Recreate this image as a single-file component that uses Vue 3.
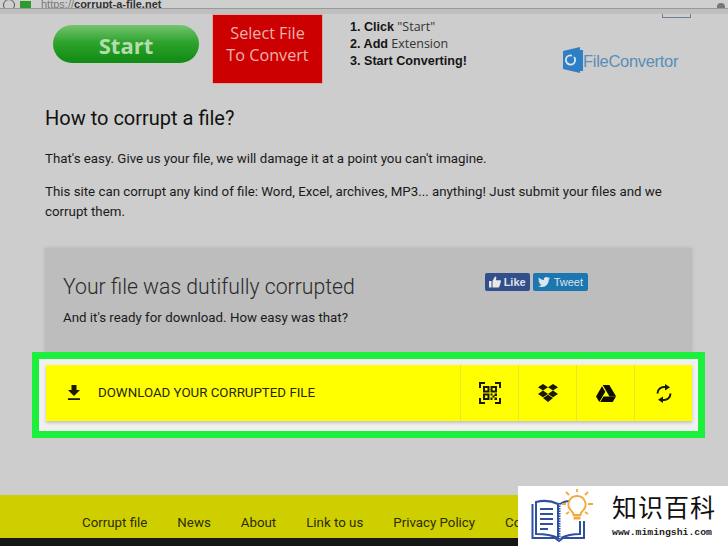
<template>
  <div class="page">
    <header class="browser-bar">
      <span class="reload"></span>
      <span class="lock"></span>
      <span class="url"><span class="scheme">https://</span>corrupt-a-file.net</span>
      <span class="menu-dot"></span>
    </header>
    <div class="bar-shadow"></div>

    <section class="ad-row">
      <div class="start-btn">Start</div>
      <div class="select-btn">Select File<br />To Convert</div>
      <ol class="steps">
        <li><b>1. Click</b> "Start"</li>
        <li><b>2. Add</b> Extension</li>
        <li><b>3. Start Converting!</b></li>
      </ol>
      <div class="convertor">
        <span class="ad-mark"></span>
        <div class="convertor-logo">
          <svg width="20" height="26" viewBox="0 0 20 26">
            <path d="M0 4 L17 0 V3 H20 V24 L17 24 V26 L0 22 Z" fill="#2f7fc4" />
            <circle cx="7.500" cy="13" r="4.600" fill="none" stroke="#dfe8f0" stroke-width="1.800" />
            <path d="M9 7 L13 9 L9 11 Z" fill="#2f7fc4" />
          </svg>
          <span>FileConvertor</span>
        </div>
      </div>
    </section>

    <main class="article">
      <h1>How to corrupt a file?</h1>
      <p>That's easy. Give us your file, we will damage it at a point you can't imagine.</p>
      <p>This site can corrupt any kind of file: Word, Excel, archives, MP3... anything! Just submit your files and we corrupt them.</p>
    </main>

    <section class="result-card">
      <div class="result-head">
        <h2>Your file was dutifully corrupted</h2>
        <div class="social">
          <span class="fb">
            <svg width="12" height="12" viewBox="0 0 12 12"><path d="M0 5h2.500v6.500H0z M3.500 5 L6 0.500 C7.200 0.500 7.600 1.500 7.200 2.800 L6.800 4.200 H11 C12 4.200 12.200 5.200 11.800 6 L10.400 10.600 C10.200 11.200 9.800 11.500 9.200 11.500 H3.500 Z" fill="#e8e8e8" /></svg>
            Like
          </span>
          <span class="tw">
            <svg width="12" height="10" viewBox="0 0 24 20"><path d="M24 2.400c-.9.4-1.800.7-2.800.8 1-.6 1.800-1.600 2.200-2.700-1 .6-2 1-3.100 1.200A4.900 4.900 0 0 0 11.900 6.100C7.800 5.900 4.200 3.900 1.700.9.400 3.200 1 6.100 3.200 7.500c-.8 0-1.500-.2-2.200-.6 0 2.400 1.700 4.400 3.900 4.900-.7.2-1.500.2-2.200.1.600 2 2.400 3.400 4.600 3.400A9.900 9.900 0 0 1 0 17.800 14 14 0 0 0 7.500 20c9.100 0 14.300-7.700 14-14.600 1-.7 1.800-1.600 2.500-3z" fill="#dce6ee" /></svg>
            Tweet
          </span>
        </div>
      </div>
      <p>And it's ready for download. How easy was that?</p>
    </section>

    <div class="highlight">
      <div class="download-bar">
        <div class="download-main">
          <svg class="dl-icon" width="14" height="15" viewBox="0 0 14 15">
            <path d="M4.500 0h5v5H13L7 11 1 5h3.500z" fill="#1c1c00" />
            <path d="M1 13.200h12V15H1z" fill="#1c1c00" />
          </svg>
          <span>DOWNLOAD YOUR CORRUPTED FILE</span>
        </div>
        <div class="action">
          <svg width="22" height="22" viewBox="0 0 22 22" fill="#1a1a00">
            <path d="M0 6V0h6v2H2v4z M16 0h6v6h-2V2h-4z M0 16h2v4h4v2H0z M20 16h2v6h-6v-2h4z" />
            <path fill-rule="evenodd" d="M4 4h6.500v6.500H4z M6 6v2.500h2.500V6z M11.500 4H18v6.500h-6.500z M13.500 6v2.500H16V6z M4 11.500h6.500V18H4z M6 13.500V16h2.500v-2.500z" />
            <path d="M11.500 11.500h2v2h-2z M15.500 11.500H18v2.500h-2.500z M13.500 13.500h2v2h-2z M11.500 15.500h2V18h-2z M15.500 15.500H18V18h-2.500z" />
          </svg>
        </div>
        <div class="action">
          <svg width="20" height="18" viewBox="0 0 20 18" fill="#1a1a00">
            <path d="M5 0 L10 3.300 L5 6.600 L0 3.300z M15 0 L20 3.300 L15 6.600 L10 3.300z M5 6.600 L10 9.900 L5 13.200 L0 9.900z M15 6.600 L20 9.900 L15 13.200 L10 9.900z M5 14 L10 10.800 L15 14 L10 18z" />
          </svg>
        </div>
        <div class="action">
          <svg width="20" height="17" viewBox="0 0 20 17" fill="#0d0d00">
            <path d="M6.700 0h6.600l6.700 11.300h-6.600z M6 1.200 L9.300 6.800 L3.300 17 L0 11.400z M7.500 11.500H20L16.700 17H4.200z" />
          </svg>
        </div>
        <div class="action">
          <svg width="16" height="19" viewBox="0 0 16 19" fill="none" stroke="#1a1a00" stroke-width="2">
            <path d="M1.500 9.500 A6.500 6.500 0 0 1 9 3.100" />
            <path d="M14.500 9.500 A6.500 6.500 0 0 1 7 15.900" />
            <path d="M9 0 L14 3.200 L9 6.400 Z M7 12.600 L2 15.800 L7 19 Z" fill="#1a1a00" stroke="none" />
          </svg>
        </div>
      </div>
    </div>

    <footer class="site-footer">
      <nav class="footer-nav">
        <span>Corrupt file</span>
        <span>News</span>
        <span>About</span>
        <span>Link to us</span>
        <span>Privacy Policy</span>
        <span>Contact</span>
      </nav>
      <div class="footer-black"></div>
    </footer>

    <aside class="watermark">
      <svg class="wm-icon" width="66" height="56" viewBox="0 0 66 56" fill="none">
        <path d="M1.500 15 V49 H24 L28 52 L32 49 H53 V32" stroke="#2f4f9f" stroke-width="2" />
        <path d="M5 45 V13 C13 11 21 12 27 15 V49 C21 46 13 45 5 45 Z" stroke="#2f4f9f" stroke-width="2" />
        <path d="M29 15 C32 13 35 12 38 12" stroke="#2f4f9f" stroke-width="2" />
        <path d="M49 32 V45 C43 45 36 46 30 49" stroke="#2f4f9f" stroke-width="2" />
        <path d="M9 20h13 M9 25h13 M9 30h13 M9 35h13 M9 40h8" stroke="#2f4f9f" stroke-width="2" />
        <path d="M28 14v36" stroke="#2f4f9f" stroke-width="3" stroke-dasharray="1.500 1" />
        <path d="M46 7 a8.500 8.500 0 0 0 -5.500 15 c1.500 1.500 2 2.500 2 4 h7 c0 -1.500 .5 -2.500 2 -4 a8.500 8.500 0 0 0 -5.500 -15z" stroke="#f2a93b" stroke-width="1.800" />
        <path d="M42.500 29h7" stroke="#f2a93b" stroke-width="3" />
        <path d="M46 0v3 M35 3l3 3 M57 3l-3 3 M31 15h4 M57 15h5 M35 25l3-2 M57 25l-3-2" stroke="#f2a93b" stroke-width="1.800" />
      </svg>
      <div class="wm-copy">
        <div class="wm-title">知识百科</div>
        <div class="wm-url">www.mimingshi.com</div>
      </div>
    </aside>
  </div>
</template>

<script setup>
</script>

<style>
html,
body {
  margin: 0;
  background: #cdcdcd;
}
</style>

<style scoped>
.page {
  position: relative;
  display: flex;
  flex-direction: column;
  width: 728px;
  height: 546px;
  overflow: hidden;
  background: #cdcdcd;
  font-family: Roboto, "Liberation Sans", sans-serif;
  color: #1a1a1a;
}

.browser-bar {
  display: flex;
  align-items: flex-end;
  flex: none;
  height: 8px;
  background: #cfcfcf;
  border-bottom: 1px solid #999;
  font-family: "Liberation Sans", sans-serif;
  overflow: hidden;
}

.reload {
  flex: none;
  width: 10px;
  height: 10px;
  margin: 0 0 -3px 3px;
  border: 1px solid #555;
  border-radius: 50%;
}

.lock {
  flex: none;
  width: 11px;
  height: 8px;
  margin: 0 0 -1px 5px;
  background: #2d9a2d;
}

.url {
  margin: 0 0 -2px 10px;
  font-size: 11px;
  line-height: 11px;
  font-weight: 700;
  color: #333;
}

.scheme {
  font-weight: 400;
  color: #777;
}

.menu-dot {
  width: 8px;
  height: 8px;
  margin: 0 3px -3px auto;
  border-radius: 50%;
  background: #777;
}

.bar-shadow {
  flex: none;
  height: 5px;
  background: #bfbfbf;
}

.ad-row {
  display: flex;
  flex: none;
  height: 70px;
  padding-left: 53px;
}

.start-btn {
  width: 146px;
  height: 38px;
  margin-top: 11px;
  border-radius: 19px;
  background: linear-gradient(#76c470, #2ea32d 45%, #0f8a12);
  color: #b5dcae;
  font-family: "Open Sans", sans-serif;
  font-size: 22px;
  font-weight: 700;
  line-height: 40px;
  text-align: center;
}

.select-btn {
  box-sizing: border-box;
  width: 111px;
  height: 70px;
  margin-left: 13px;
  padding-top: 7px;
  border: 1px solid #e4a7a0;
  background: #cc0000;
  color: #efb3ac;
  font-family: "Open Sans", sans-serif;
  font-size: 16.200px;
  line-height: 22px;
  text-align: center;
}

.steps {
  margin: 4px 0 0 27px;
  padding: 0;
  list-style: none;
  width: 194px;
  font-family: "Open Sans", sans-serif;
  font-size: 12.500px;
  color: #333;
}

.steps li {
  height: 17px;
  line-height: 17px;
}

.steps b {
  color: #151515;
  font-family: "Liberation Sans", sans-serif;
  font-size: 12.600px;
}

.convertor {
  display: flex;
  flex-direction: column;
  width: 147px;
}

.ad-mark {
  align-self: flex-end;
  width: 29px;
  height: 4px;
  border: 1px solid #6f7f95;
  border-top: none;
  box-sizing: border-box;
}

.convertor-logo {
  display: flex;
  align-items: center;
  margin: 29px 0 0 19px;
  color: #5a8db8;
  font-size: 16.500px;
  letter-spacing: -0.300px;
  font-family: "Liberation Sans", sans-serif;
}

.convertor-logo svg {
  flex: none;
}

.convertor-logo span {
  padding-top: 2px;
}

.article {
  flex: none;
  height: 164px;
  padding: 0 30px 0 45px;
  font-size: 13.300px;
  line-height: 20px;
}

.article h1 {
  margin: 19px 0 16px;
  font-size: 20px;
  line-height: 30px;
  font-weight: 400;
  color: #111;
}

.article p {
  margin: 0 0 13px;
}

.result-card {
  box-sizing: border-box;
  flex: none;
  width: 647px;
  height: 104px;
  margin-left: 45px;
  padding: 25px 18px 0;
  background: #bdbdbd;
  box-shadow: 0 0 4px rgba(0, 0, 0, 0.12);
}

.result-head {
  display: flex;
  align-items: flex-start;
  padding-right: 86px;
}

.result-card h2 {
  flex: 1;
  margin: 0;
  font-size: 21.200px;
  line-height: 28px;
  font-weight: 300;
  color: #2a2a2a;
}

.result-card p {
  margin: 7px 0 0;
  font-size: 13.300px;
  line-height: 20px;
}

.social {
  display: flex;
  gap: 3px;
  font-family: "Liberation Sans", sans-serif;
  font-size: 11px;
}

.fb,
.tw {
  display: flex;
  align-items: center;
  gap: 4px;
  height: 18px;
  padding: 0 5px;
  border-radius: 2px;
  color: #dfe3ea;
  font-weight: 700;
}

.fb {
  gap: 3px;
  padding: 0 4px;
  background: #324e8b;
}

.tw {
  background: #1c76b0;
  font-weight: 400;
}

.highlight {
  box-sizing: border-box;
  flex: none;
  width: 673px;
  height: 86px;
  margin-left: 32px;
  padding: 6px 6px 9px 7px;
  border: 7px solid #1cf03c;
  background: #f0f0f0;
}

.download-bar {
  display: flex;
  height: 56px;
  background: #ffff00;
  box-shadow: 0 2px 3px rgba(0, 0, 0, 0.2);
}

.download-main {
  display: flex;
  flex: 1;
  align-items: center;
  padding: 0 0 2px 21px;
  gap: 17px;
  font-family: Roboto, sans-serif;
  font-size: 13.300px;
  color: #26260a;
}

.dl-icon {
  flex: none;
}

.action {
  display: flex;
  align-items: center;
  justify-content: center;
  flex: none;
  width: 57px;
  border-left: 1px solid #e6e62e;
}

.site-footer {
  flex: none;
  margin-top: 57px;
}

.footer-nav {
  display: flex;
  gap: 30px;
  height: 43px;
  padding: 18px 0 0 82px;
  box-sizing: border-box;
  background: #cfcf00;
  font-family: Roboto, sans-serif;
  font-size: 13.300px;
  line-height: 20px;
  color: #2c2c08;
  white-space: nowrap;
}

.footer-black {
  height: 8px;
  background: #161616;
}

.watermark {
  position: absolute;
  right: 0;
  bottom: 0;
  display: flex;
  width: 210px;
  height: 60px;
  background: #fff;
}

.wm-icon {
  flex: none;
  margin: 3px 0 0 13px;
}

.wm-copy {
  margin-left: 15px;
}

.wm-title {
  margin-top: 3px;
  font-family: "Noto Sans CJK SC", sans-serif;
  font-size: 25px;
  line-height: 34px;
  letter-spacing: 1px;
  color: #111;
}

.wm-url {
  font-family: "Liberation Mono", monospace;
  font-size: 9.800px;
  font-weight: 700;
  line-height: 12px;
  margin-top: 4px;
  color: #222;
}
</style>
